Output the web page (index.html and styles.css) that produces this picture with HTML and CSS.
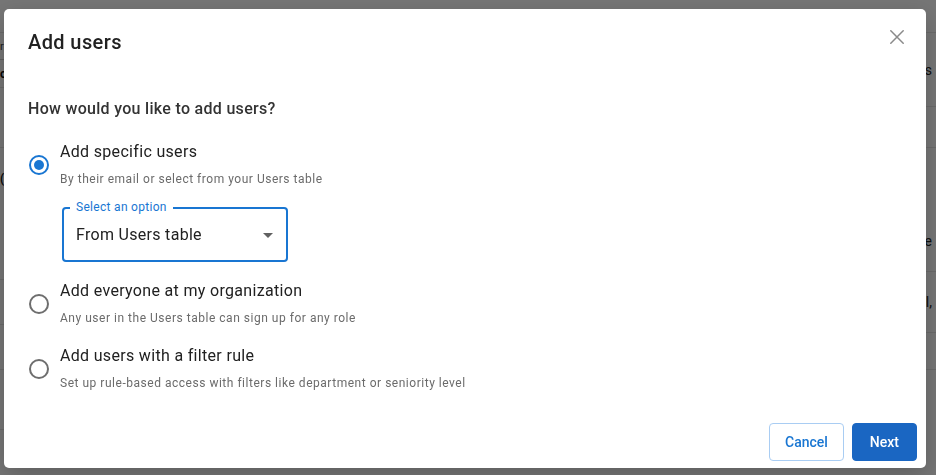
FILE: index.html
```html
<!DOCTYPE html>
<html lang="en">
<head>
<meta charset="utf-8">
<title>Add users</title>
<link rel="stylesheet" href="styles.css">
</head>
<body>
<div class="page">
  <div class="topbar"></div>
  <div class="panes">
    <div class="pane pane-left">
      <div class="prow r1"><span class="frag">r</span></div>
      <div class="prow r2"><span class="frag dark">o</span></div>
      <div class="prow r3"></div>
      <div class="prow r4"><span class="frag dark">(</span></div>
      <div class="prow r5"></div>
      <div class="prow r6"></div>
      <div class="prow r7"></div>
    </div>
    <div class="pane pane-right">
      <div class="prow q1"><span class="rfrag">Roles</span></div>
      <div class="prow q2"></div>
      <div class="prow q3"><span class="rfrag">Title</span></div>
      <div class="prow q4"><span class="rfrag">Email,</span></div>
      <div class="prow q5"></div>
    </div>
  </div>
</div>

<div class="scrim">
  <div class="dialog" role="dialog" aria-labelledby="dlg-title">
    <div class="dialog-header">
      <h2 id="dlg-title" class="dialog-title">Add users</h2>
      <button class="close-btn" aria-label="Close">
        <svg width="14" height="14" viewBox="0 0 14 14" aria-hidden="true">
          <path d="M0.8 0.8L13.2 13.2M13.2 0.8L0.8 13.2" stroke="#8a8a8a" stroke-width="1.5" fill="none" stroke-linecap="round"/>
        </svg>
      </button>
    </div>

    <div class="dialog-body">
      <p class="question">How would you like to add users?</p>

      <div class="option first">
        <span class="radio">
          <svg width="22" height="22" viewBox="0 0 22 22" aria-hidden="true">
            <circle cx="11" cy="11" r="9" fill="none" stroke="#1976d2" stroke-width="2"/>
            <circle cx="11" cy="11" r="5" fill="#1976d2"/>
          </svg>
        </span>
        <div class="option-text">
          <div class="option-title">Add specific users</div>
          <div class="option-sub">By their email or select from your Users table</div>
        </div>
      </div>

      <div class="select">
        <span class="select-label">Select an option</span>
        <span class="select-value">From Users table</span>
        <svg class="select-arrow" width="24" height="24" viewBox="0 0 24 24" aria-hidden="true">
          <path d="M7 10l5 5 5-5z" fill="#616161"/>
        </svg>
      </div>

      <div class="option second">
        <span class="radio">
          <svg width="22" height="22" viewBox="0 0 22 22" aria-hidden="true">
            <circle cx="11" cy="11" r="9" fill="none" stroke="#6e6e6e" stroke-width="2"/>
          </svg>
        </span>
        <div class="option-text">
          <div class="option-title">Add everyone at my organization</div>
          <div class="option-sub">Any user in the Users table can sign up for any role</div>
        </div>
      </div>

      <div class="option third">
        <span class="radio">
          <svg width="22" height="22" viewBox="0 0 22 22" aria-hidden="true">
            <circle cx="11" cy="11" r="9" fill="none" stroke="#6e6e6e" stroke-width="2"/>
          </svg>
        </span>
        <div class="option-text">
          <div class="option-title">Add users with a filter rule</div>
          <div class="option-sub">Set up rule-based access with filters like department or seniority level</div>
        </div>
      </div>
    </div>

    <div class="dialog-footer">
      <button class="btn btn-outline">Cancel</button>
      <button class="btn btn-primary">Next</button>
    </div>
  </div>
</div>
</body>
</html>
```

FILE: styles.css
```css
* {
  box-sizing: border-box;
}

html, body {
  margin: 0;
  padding: 0;
  height: 100%;
  overflow: hidden;
}

body {
  font-family: Roboto, "Liberation Sans", Arial, sans-serif;
  background: #ffffff;
  color: #212121;
}

/* ---------- background page ---------- */
.page {
  height: 100%;
  background: #ffffff;
}

.topbar {
  height: 33px;
  border-bottom: 1px solid #e6e6e6;
}

.panes {
  display: flex;
  justify-content: space-between;
}

.pane {
  width: 50%;
  display: flex;
  flex-direction: column;
}

.prow {
  border-bottom: 1px solid #e6e6e6;
  font-size: 14px;
  color: #222;
  display: flex;
  align-items: center;
}

.frag {
  font-size: 11px;
  color: #444;
}

.frag.dark {
  font-size: 12px;
  font-weight: 700;
  color: #111;
}

.r1 { height: 27px; border-bottom-color: #cfcfcf; }
.r2 { height: 28px; }
.r3 { height: 60px; }
.r4 { height: 132px; align-items: flex-start; padding-top: 24px; }
.r5 { height: 45px; }
.r6 { height: 45px; }
.r7 { height: 60px; }

.pane-right .prow {
  justify-content: flex-end;
  padding-right: 4px;
}

.q1 { height: 74px; }
.q2 { height: 41px; }
.q3 { height: 124px; align-items: flex-end; padding-bottom: 22px; }
.q4 { height: 61px; }
.q5 { height: 37px; }

/* ---------- scrim + dialog ---------- */
.scrim {
  position: fixed;
  inset: 0;
  background: rgba(0, 0, 0, 0.54);
  padding: 9px 10px 7px 4px;
  display: flex;
}

.dialog {
  flex: 1;
  background: #ffffff;
  border-radius: 5px;
  display: flex;
  flex-direction: column;
  box-shadow: 0 8px 24px rgba(0, 0, 0, 0.2);
}

.dialog-header {
  display: flex;
  justify-content: space-between;
  align-items: flex-start;
  padding: 17px 22px 0 24px;
}

.dialog-title {
  margin: 0;
  font-size: 20px;
  line-height: 32px;
  font-weight: 500;
  letter-spacing: 0.4px;
  color: #212121;
}

.close-btn {
  margin-top: 4px;
  padding: 0;
  border: 0;
  background: none;
  width: 14px;
  height: 14px;
  display: block;
  cursor: pointer;
}

.close-btn svg {
  display: block;
}

.dialog-body {
  padding: 0 24px;
}

.question {
  margin: 39px 0 0;
  font-size: 16px;
  line-height: 24px;
  font-weight: 500;
  letter-spacing: 0.3px;
  color: #333333;
}

.option {
  display: flex;
  align-items: center;
}

.option.first { margin-top: 19px; }
.option.second { margin-top: 17px; }
.option.third { margin-top: 16px; }

.radio {
  width: 22px;
  height: 22px;
  margin-right: 10px;
  flex: none;
}

.radio svg {
  display: block;
}

.option-title {
  font-size: 16px;
  line-height: 24px;
  letter-spacing: 0.32px;
  color: #212121;
}

.option-sub {
  margin-top: 5px;
  font-size: 12px;
  line-height: 20px;
  color: #6b6b6b;
  letter-spacing: 0.52px;
}

/* ---------- select ---------- */
.select {
  position: relative;
  margin: 18px 0 0 34px;
  width: 226px;
  height: 55px;
  border: 2px solid #1976d2;
  border-radius: 4px;
  display: flex;
  align-items: center;
  justify-content: space-between;
  padding: 0 6px 0 12px;
}

.select-label {
  position: absolute;
  top: -9px;
  left: 6px;
  padding: 0 6px 0 6px;
  background: #ffffff;
  font-size: 12px;
  line-height: 14px;
  letter-spacing: 0.3px;
  color: #1976d2;
}

.select-value {
  font-size: 16px;
  line-height: 24px;
  letter-spacing: 0.3px;
  color: #212121;
}

.select-arrow {
  display: block;
}

/* ---------- footer ---------- */
.dialog-footer {
  margin-top: auto;
  display: flex;
  justify-content: flex-end;
  gap: 8px;
  padding: 0 9px 7px 0;
}

.btn {
  height: 38px;
  border-radius: 4px;
  font-family: Roboto, "Liberation Sans", Arial, sans-serif;
  font-size: 14px;
  font-weight: 500;
  cursor: pointer;
}

.btn-outline {
  background: #ffffff;
  color: #1976d2;
  border: 1px solid #a9cdf3;
  padding: 0 15px;
}

.btn-primary {
  background: #1a66c2;
  color: #ffffff;
  border: 1px solid #1a66c2;
  padding: 0 17px;
}
```
